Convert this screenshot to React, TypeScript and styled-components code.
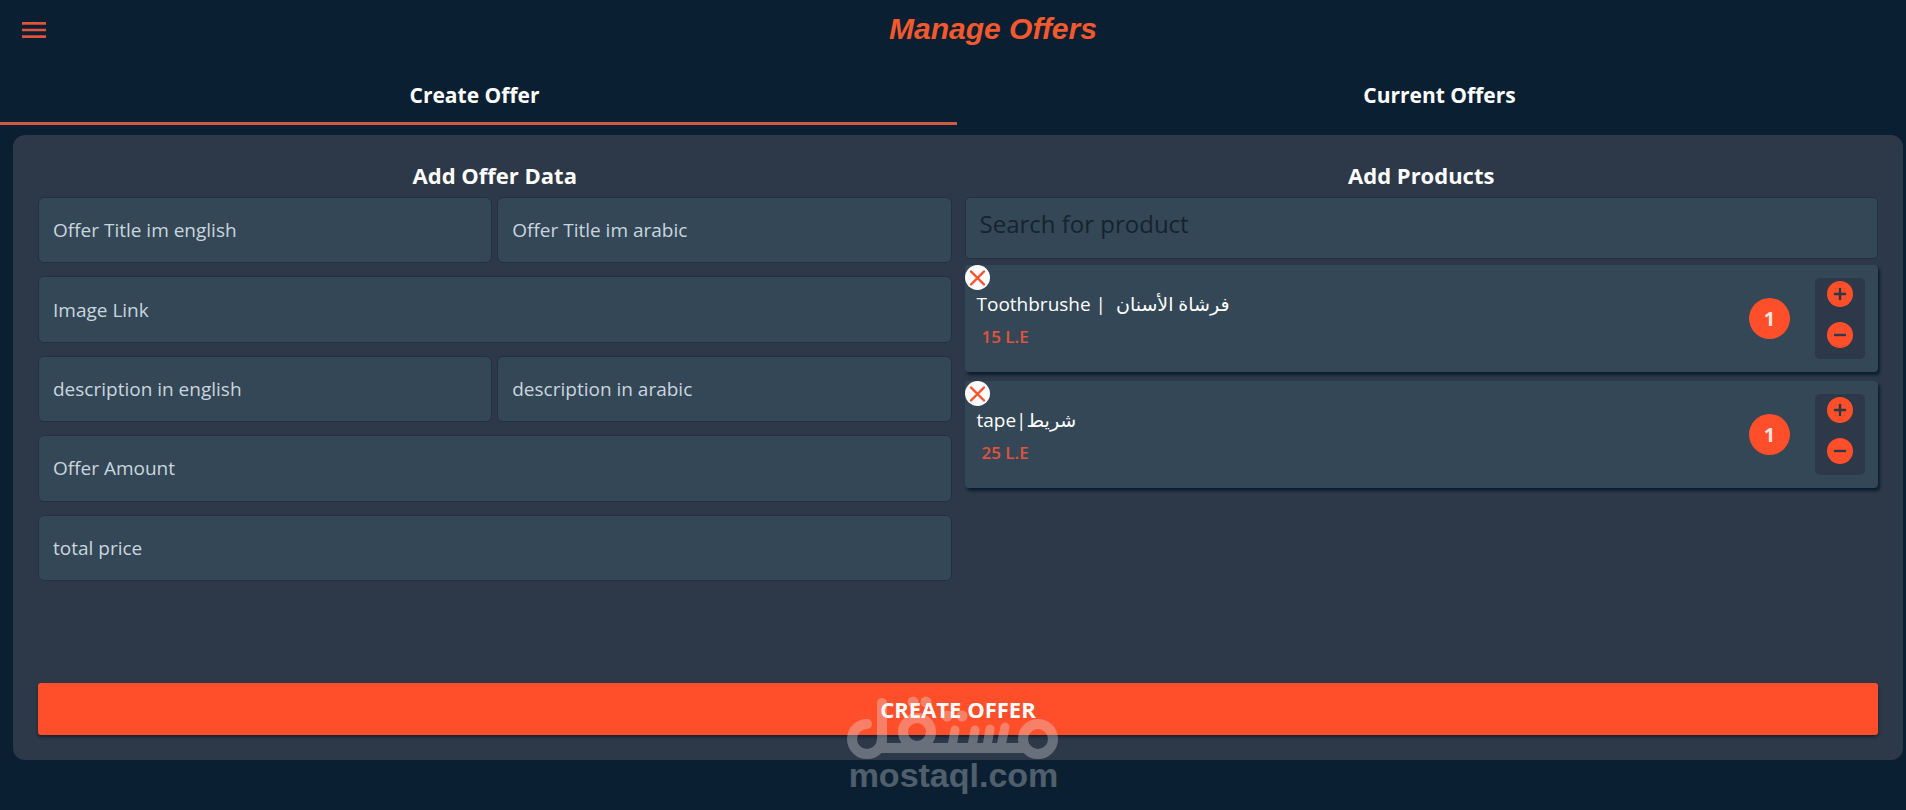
import React, { useState } from "react";
import styled, { createGlobalStyle } from "styled-components";

const color = {
  page: "#0a1f31",
  panel: "#2d3848",
  field: "#344756",
  edge: "#243040",
  accent: "#ff4f2a",
  accentSoft: "#e2533c",
};

const sans = `"Open Sans", "Noto Sans", "DejaVu Sans", sans-serif`;

const GlobalStyle = createGlobalStyle`
  *, *::before, *::after { box-sizing: border-box; }
  body {
    margin: 0;
    background: ${color.page};
    color: #fff;
    font-family: ${sans};
    overflow-x: hidden;
  }
  button { font-family: inherit; cursor: pointer; border: 0; padding: 0; }
`;

const Page = styled.div`
  position: relative;
  min-height: 100vh;
  display: flex;
  flex-direction: column;
`;

const TopBar = styled.header`
  height: 64px;
  padding: 14px 18px 18px;
  display: flex;
  align-items: center;
`;

const MenuButton = styled.button`
  width: 32px;
  height: 32px;
  background: none;
  color: ${color.accentSoft};
  svg { display: block; }
`;

const Title = styled.h1`
  flex: 1;
  margin: 0;
  padding: 0 0 2px 48px;
  text-align: center;
  font: italic bold 30px/32px "Liberation Sans", Arial, sans-serif;
  color: #f4592d;
`;

const Tabs = styled.nav`
  display: flex;
  margin: 0 -16px 10px -8px;
`;

const Tab = styled.button<{ $active: boolean }>`
  flex: 1;
  height: 61px;
  padding-top: 4px;
  background: none;
  color: #fff;
  font-size: 21px;
  font-weight: 700;
  border-bottom: 3px solid ${(p) => (p.$active ? "#d25a40" : "transparent")};
`;

const Panel = styled.main`
  margin: 0 3px 50px 13px;
  padding: 24px 25px 25px;
  background: ${color.panel};
  border-radius: 12px;
`;

const Columns = styled.div`
  display: grid;
  grid-template-columns: 1fr 1fr;
  column-gap: 13px;
  min-height: 524px;
  align-items: start;
`;

const Heading = styled.h2`
  margin: 0 0 6px;
  text-align: center;
  font-size: 22px;
  line-height: 32px;
  font-weight: 700;
`;

const Fields = styled.div`
  height: 384px;
  display: grid;
  grid-template-columns: 1fr 1fr;
  grid-template-rows: repeat(5, 1fr);
  gap: 13px 5px;
`;

const Field = styled.input<{ $wide?: boolean }>`
  grid-column: ${(p) => (p.$wide ? "span 2" : "auto")};
  min-width: 0;
  width: 100%;
  padding: 0 14px;
  border: 1px solid ${color.edge};
  border-radius: 6px;
  background: ${color.field};
  color: #fff;
  font-family: inherit;
  font-size: 19px;
  &::placeholder { color: #c9d6df; opacity: 1; }
`;

const Search = styled.input`
  display: block;
  width: 100%;
  height: 62px;
  margin-bottom: 6px;
  padding: 0 14px 10px;
  border: 1px solid ${color.edge};
  border-radius: 4px;
  background: ${color.field};
  color: #fff;
  font-family: inherit;
  font-size: 24px;
  &::placeholder { color: #14242f; opacity: 1; }
`;

const Products = styled.ul`
  margin: 0;
  padding: 0;
  list-style: none;
  display: grid;
  row-gap: 9px;
`;

const Card = styled.li`
  position: relative;
  height: 107px;
  padding: 13px 13px 13px 12px;
  display: flex;
  align-items: flex-start;
  background: ${color.field};
  border-radius: 4px;
  box-shadow: 2px 3px 3px #0a1f31;
`;

const RemoveButton = styled.button`
  position: absolute;
  top: 0;
  left: 0;
  width: 25px;
  height: 25px;
  border-radius: 50%;
  background: #fff;
  color: ${color.accent};
  svg { display: block; }
`;

const Info = styled.div`
  flex: 1;
  padding-top: 11px;
`;

const Name = styled.div`
  font-size: 19px;
  line-height: 30px;
  font-weight: 500;
  white-space: pre;
`;

const Price = styled.div`
  padding: 4px 5px 0;
  font-size: 17px;
  line-height: 28px;
  font-weight: 600;
  color: ${color.accentSoft};
`;

const Count = styled.span`
  width: 41px;
  height: 41px;
  margin: 20px 25px 0 0;
  border-radius: 50%;
  background: ${color.accent};
  color: #ffe4de;
  font-size: 20px;
  line-height: 41px;
  font-weight: 700;
  text-align: center;
`;

const Stepper = styled.div`
  width: 50px;
  height: 81px;
  padding: 3px 0 11px;
  display: flex;
  flex-direction: column;
  align-items: center;
  justify-content: space-between;
  border-radius: 5px;
  background: ${color.panel};
`;

const StepButton = styled.button`
  width: 26px;
  height: 26px;
  border-radius: 50%;
  background: ${color.accent};
  color: ${color.panel};
  svg { display: block; }
`;

const Submit = styled.button`
  display: block;
  width: 100%;
  height: 52px;
  border-radius: 3px;
  background: ${color.accent};
  color: #fff;
  font-size: 22px;
  font-weight: 700;
  box-shadow: 0 2px 3px rgba(10, 20, 32, 0.6);
`;

const Watermark = styled.div`
  position: absolute;
  top: 696px;
  left: calc(50% - 106px);
  width: 213px;
  opacity: 0.32;
  pointer-events: none;
  color: #e4e7ea;
  font: bold 34px/30px "Liberation Sans", Arial, sans-serif;
  text-align: center;
  svg { display: block; }
`;

const fields = [
  { label: "Offer Title im english" },
  { label: "Offer Title im arabic" },
  { label: "Image Link", wide: true },
  { label: "description in english" },
  { label: "description in arabic" },
  { label: "Offer Amount", wide: true },
  { label: "total price", wide: true },
];

const initialProducts = [
  { id: 1, name: "Toothbrushe |  فرشاة الأسنان", price: 15, count: 1 },
  { id: 2, name: "tape|شريط", price: 25, count: 1 },
];

const MenuIcon = () => (
  <svg width="32" height="32" viewBox="0 0 24 24" fill="currentColor">
    <path d="M3 18h18v-2H3v2zm0-5h18v-2H3v2zm0-7v2h18V6H3z" />
  </svg>
);

const CrossIcon = () => (
  <svg width="25" height="25" viewBox="0 0 25 25" stroke="currentColor" strokeWidth="2.4" strokeLinecap="round">
    <path d="M6 6.5l13 13M19 6.5l-13 13" />
  </svg>
);

const StepIcon = ({ plus }: { plus?: boolean }) => (
  <svg width="26" height="26" viewBox="0 0 26 26" stroke="currentColor" strokeWidth="2.4">
    <path d={plus ? "M7 13h12M13 7v12" : "M7 13h12"} />
  </svg>
);

const MostaqlLogo = () => (
  <svg width="213" height="64" viewBox="0 0 213 64" fill="none" stroke="currentColor" strokeWidth="10" strokeLinecap="round">
    <path d="M20 28A15 15 0 1 0 35 43V7M35 52H178" />
    <circle cx="70" cy="36" r="14" />
    <circle cx="191" cy="43" r="15" />
    <path strokeWidth="9" d="M108 34l-3 16M128 34l-3 16M143 33l-3 17M158 31l-4 19" />
    <path strokeWidth="11" d="M66 6h.01M79 6h.01M100 20h.01M115 20h.01" />
  </svg>
);

export default function App() {
  const [tab, setTab] = useState(0);
  const [products, setProducts] = useState(initialProducts);

  const change = (id: number, by: number) =>
    setProducts((list) => list.map((p) => (p.id === id ? { ...p, count: Math.max(1, p.count + by) } : p)));

  return (
    <Page>
      <GlobalStyle />
      <TopBar>
        <MenuButton aria-label="Menu"><MenuIcon /></MenuButton>
        <Title>Manage Offers</Title>
      </TopBar>
      <Tabs>
        {["Create Offer", "Current Offers"].map((label, i) => (
          <Tab key={label} $active={tab === i} onClick={() => setTab(i)}>{label}</Tab>
        ))}
      </Tabs>
      <Panel>
        <Columns>
          <section>
            <Heading>Add Offer Data</Heading>
            <Fields>
              {fields.map((f) => (
                <Field key={f.label} $wide={f.wide} placeholder={f.label} aria-label={f.label} />
              ))}
            </Fields>
          </section>
          <section>
            <Heading>Add Products</Heading>
            <Search placeholder="Search for product" aria-label="Search for product" />
            <Products>
              {products.map((p) => (
                <Card key={p.id}>
                  <RemoveButton
                    aria-label="Remove product"
                    onClick={() => setProducts((list) => list.filter((x) => x.id !== p.id))}
                  >
                    <CrossIcon />
                  </RemoveButton>
                  <Info>
                    <Name>{p.name}</Name>
                    <Price>{p.price} L.E</Price>
                  </Info>
                  <Count>{p.count}</Count>
                  <Stepper>
                    <StepButton aria-label="Increase" onClick={() => change(p.id, 1)}><StepIcon plus /></StepButton>
                    <StepButton aria-label="Decrease" onClick={() => change(p.id, -1)}><StepIcon /></StepButton>
                  </Stepper>
                </Card>
              ))}
            </Products>
          </section>
        </Columns>
        <Submit>CREATE OFFER</Submit>
      </Panel>
      <Watermark>
        <MostaqlLogo />
        mostaql.com
      </Watermark>
    </Page>
  );
}
